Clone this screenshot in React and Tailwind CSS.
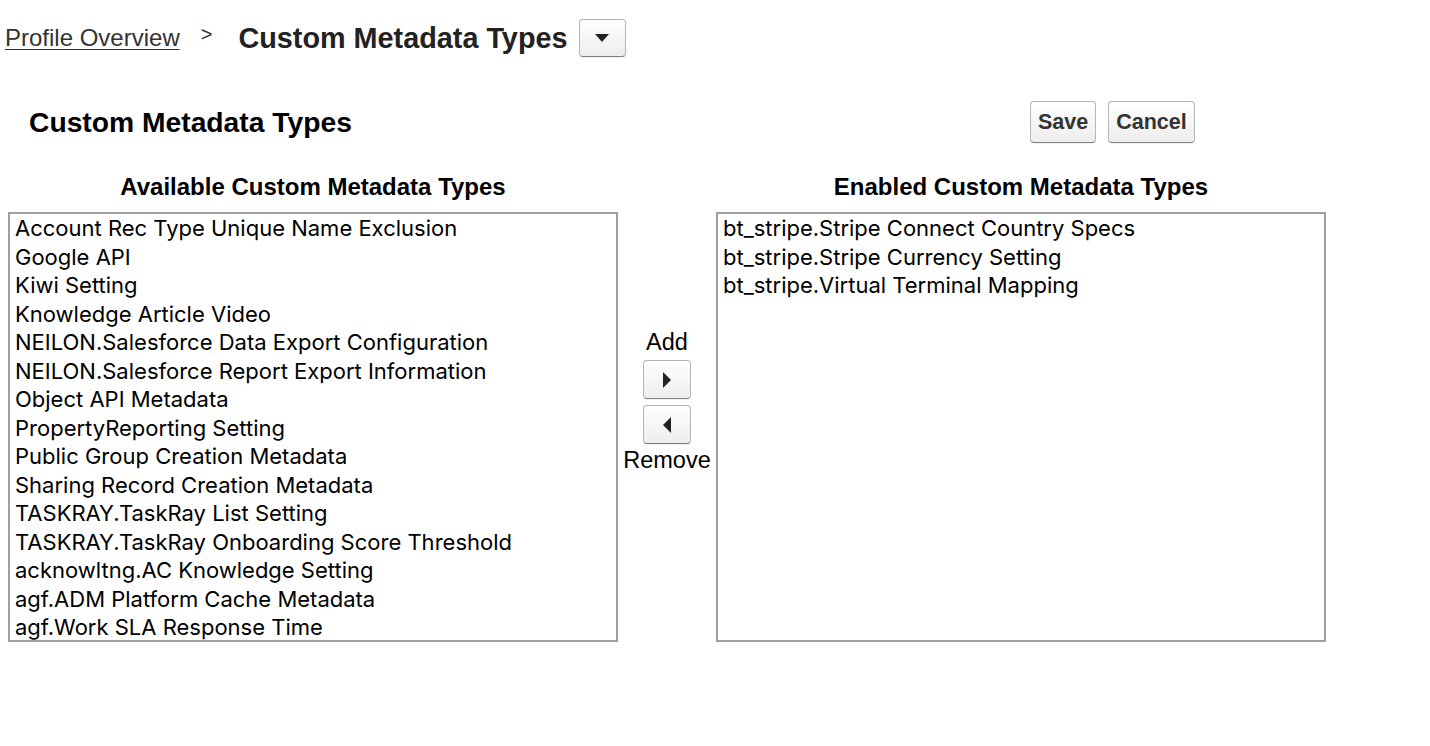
import React from "react";

const available = [
  "Account Rec Type Unique Name Exclusion",
  "Google API",
  "Kiwi Setting",
  "Knowledge Article Video",
  "NEILON.Salesforce Data Export Configuration",
  "NEILON.Salesforce Report Export Information",
  "Object API Metadata",
  "PropertyReporting Setting",
  "Public Group Creation Metadata",
  "Sharing Record Creation Metadata",
  "TASKRAY.TaskRay List Setting",
  "TASKRAY.TaskRay Onboarding Score Threshold",
  "acknowltng.AC Knowledge Setting",
  "agf.ADM Platform Cache Metadata",
  "agf.Work SLA Response Time",
];

const enabled = [
  "bt_stripe.Stripe Connect Country Specs",
  "bt_stripe.Stripe Currency Setting",
  "bt_stripe.Virtual Terminal Mapping",
];

const btn =
  "rounded-[4px] border border-[#b5b5b5] border-b-[#7f7f7f] bg-gradient-to-b from-white to-[#ededed] shadow-[0_1px_0_rgba(0,0,0,0.05)]";

function ListBox({ items }) {
  return (
    <div
      className="h-[430px] w-[610px] overflow-hidden border-2 border-[#a0a0a0] bg-white px-[5px] pt-0"
      style={{ fontFamily: 'Inter, "Liberation Sans", sans-serif' }}
    >
      {items.map((t) => (
        <div key={t} className="h-[28.5px] text-[22px] leading-[28px] text-black whitespace-nowrap">
          {t}
        </div>
      ))}
    </div>
  );
}

export default function App() {
  return (
    <div
      className="min-h-[746px] w-[1430px] bg-white text-black"
      style={{ fontFamily: '"Liberation Sans", Arial, sans-serif' }}
    >
      <div className="flex items-center pl-[5px] pt-[19px]">
        <a className="text-[24px] leading-[38px] text-[#333] underline underline-offset-[3px] decoration-1">
          Profile Overview
        </a>
        <span className="ml-[21px] mt-[-8px] text-[20px] text-[#333]">&gt;</span>
        <span className="ml-[26px] text-[28.8px] font-bold text-[#222] leading-[38px]">Custom Metadata Types</span>
        <button className={`ml-[11px] flex h-[38px] w-[47px] items-center justify-center ${btn}`}>
          <svg width="16" height="10" viewBox="0 0 16 10">
            <path d="M1 1 H15 L8 9 Z" fill="#222" />
          </svg>
        </button>
      </div>

      <div className="mt-[44px] flex items-center">
        <div className="ml-[29px] w-[1001px] text-[28.25px] font-bold leading-[42px]">Custom Metadata Types</div>
        <button className={`h-[42px] w-[66px] text-[21.5px] font-bold text-[#333] ${btn}`}>Save</button>
        <button className={`ml-[12px] h-[42px] w-[87px] text-[21.5px] font-bold text-[#333] ${btn}`}>Cancel</button>
      </div>

      <div className="mt-[29px] ml-[8px] flex">
        <div className="flex flex-col">
          <div className="h-[40px] text-center text-[24px] font-bold leading-[30px]">Available Custom Metadata Types</div>
          <ListBox items={available} />
        </div>
        <div className="flex w-[98px] flex-col items-center pt-[157px]">
          <div className="text-[23.5px] leading-[26px]">Add</div>
          <button className={`mt-[5px] flex h-[39px] w-[48px] items-center justify-center ${btn}`}>
            <svg width="10" height="18" viewBox="0 0 10 18">
              <path d="M1 1 L9 9 L1 17 Z" fill="#222" />
            </svg>
          </button>
          <button className={`mt-[6px] flex h-[39px] w-[48px] items-center justify-center ${btn}`}>
            <svg width="10" height="18" viewBox="0 0 10 18">
              <path d="M9 1 L1 9 L9 17 Z" fill="#222" />
            </svg>
          </button>
          <div className="mt-[3px] text-[23.5px] leading-[26px]">Remove</div>
        </div>
        <div className="flex flex-col">
          <div className="h-[40px] text-center text-[24px] font-bold leading-[30px]">Enabled Custom Metadata Types</div>
          <ListBox items={enabled} />
        </div>
      </div>
    </div>
  );
}
